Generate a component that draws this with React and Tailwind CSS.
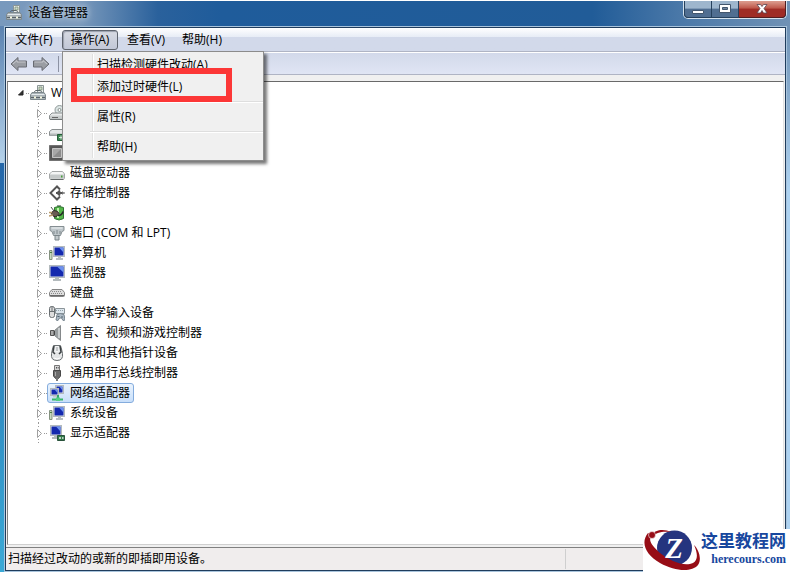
import { useState } from 'react';
import clsx from 'clsx';

const MENUS = ['文件(F)', '操作(A)', '查看(V)', '帮助(H)'];

const ACTIONS = [['扫描检测硬件改动(A)', '添加过时硬件(L)'], ['属性(R)'], ['帮助(H)']];

const DEVICES = [
  { id: 'optical', icon: OpticalIcon },
  { id: 'ide', icon: IdeIcon },
  { id: 'cpu', icon: ChipIcon },
  { id: 'disk', label: '磁盘驱动器', icon: DiskIcon },
  { id: 'storage', label: '存储控制器', icon: StorageIcon },
  { id: 'battery', label: '电池', icon: BatteryIcon },
  { id: 'port', label: '端口 (COM 和 LPT)', icon: PortIcon },
  { id: 'computer', label: '计算机', icon: ComputerIcon },
  { id: 'monitor', label: '监视器', icon: MonitorIcon },
  { id: 'keyboard', label: '键盘', icon: KeyboardIcon },
  { id: 'hid', label: '人体学输入设备', icon: HidIcon },
  { id: 'sound', label: '声音、视频和游戏控制器', icon: SpeakerIcon },
  { id: 'mouse', label: '鼠标和其他指针设备', icon: MouseIcon },
  { id: 'usb', label: '通用串行总线控制器', icon: UsbIcon },
  { id: 'network', label: '网络适配器', icon: NetworkIcon },
  { id: 'system', label: '系统设备', icon: ComputerIcon },
  { id: 'display', label: '显示适配器', icon: DisplayIcon }
];

function Icon({ children }) {
  return (
    <svg viewBox="0 0 16 16" className="size-4 shrink-0" aria-hidden="true">
      {children}
    </svg>
  );
}

function ManagerIcon() {
  return (
    <Icon>
      <path d="M7.5.5h6v8h-6z" fill="#e8ecea" stroke="#8b9695" />
      <path d="M9 2h3v3H9z" fill="#cfdccb" stroke="#71876b" strokeWidth=".7" />
      <path d="M4 7.5 5.5 5.5h5L12 7.5" fill="none" stroke="#5f686c" />
      <path d="M2 7.5h12l1.5 2.5v4.5H.5V10z" fill="#a9b2b6" stroke="#7d888d" />
      <path d="M1.5 9.5h13" stroke="#e4eaed" />
      <path d="M1 12.5h14" stroke="#596368" />
      <path d="M4 11.5h2v2H4zM10 11.5h2v2h-2z" fill="#f3f5dd" />
    </Icon>
  );
}

function OpticalIcon() {
  return (
    <Icon>
      <circle cx="10.5" cy="5" r="4.5" fill="#dce5e4" stroke="#929b9b" />
      <circle cx="10.5" cy="5" r="1.5" fill="#fff" stroke="#86918f" />
      <path d="M3 8h10.5l2 2.5V14H.5v-3.5z" fill="#e9ebeb" stroke="#8a8f90" />
      <path d="M1 10.5h14v3H1z" fill="#c9cdcd" />
      <path d="M1 14.5h14" stroke="#707576" />
      <path d="M3 12.5h6" stroke="#666" />
    </Icon>
  );
}

function IdeIcon() {
  return (
    <Icon>
      <path d="M3 4.5h10.5l2 2v4H.5v-4z" fill="#e3e6e6" stroke="#8a8f90" />
      <path d="M1 8.5h14v2H1z" fill="#b5baba" />
      <path d="M8.5 9.5h7v6h-7z" fill="#3c8652" stroke="#245c37" />
      <path d="M10 12.5h4M12 10.5v4" stroke="#d9eadb" />
    </Icon>
  );
}

function ChipIcon() {
  return (
    <Icon>
      <path d="M.5.5h15v15H.5z" fill="#5d5d5d" stroke="#393939" strokeDasharray="1 1" />
      <path d="M1.5 1.5h13v13h-13z" fill="#555" />
      <path d="M3.500 3.500h9v9h-9z" fill="#a8a8a8" stroke="#c4c4c4" />
      <path d="M4 12 12 4v8z" fill="#8d8d8d" />
    </Icon>
  );
}

function DiskIcon() {
  return (
    <Icon>
      <path d="M3 6.500h10.500l2 2.500v4q0 1-1 1h-13q-1 0-1-1V9z" fill="#f4f5f5" stroke="#a5a8a8" />
      <path d="M1 9.500h14v3.500H1z" fill="#c5c9c9" />
      <path d="M1.500 14.500h13" stroke="#666b6b" />
      <path d="M12 10.500h1.500v2H12z" fill="#48a03c" />
    </Icon>
  );
}

function StorageIcon() {
  return (
    <Icon>
      <path d="M11 4.500 8 1.500 1.500 8 8 14.500l3-3" fill="none" stroke="#555" strokeWidth="2" />
      <path d="M8 3 3 8l5 5" fill="none" stroke="#c4c4c4" />
      <path d="M7 8h8.500M11 5.500 8.500 8l2.500 2.500" fill="none" stroke="#555" strokeWidth="2" />
      <path d="M13 6.500 15 8l-2 1.500" fill="none" stroke="#999" />
    </Icon>
  );
}

function BatteryIcon() {
  return (
    <Icon>
      <path d="M8 0h4v2H8z" fill="#969b96" />
      <path d="M5.500 2.500q4.500-2 9 0v11q-4.500 3-9 0z" fill="#54b849" stroke="#327236" />
      <path d="M9 3v10" stroke="#bdf0ad" strokeWidth="2" />
      <path d="M2 8 5 5.500q4 0 5 3L7 12l-3-1z" fill="#6a5d55" stroke="#322a27" />
      <path d="M0 7.500h3M0 11l4-1" stroke="#b99b69" strokeWidth="1.5" />
      <path d="M9 10.500q4 0 5-4" fill="none" stroke="#272c28" strokeWidth="1.5" />
      <path d="m2 2 3 4" stroke="#4b514c" />
    </Icon>
  );
}

function PortIcon() {
  return (
    <Icon>
      <path d="M1 1.500h14v4l-2 1-1.500 4h-7L3 6.500l-2-1z" fill="#bfc7cb" stroke="#858e92" />
      <path d="M2.500 3h11" stroke="#f0f4f5" />
      <path d="M5 6v3M8 5v4M11 6v3" stroke="#7f888c" />
      <path d="M6 10.500h4V15H6z" fill="#c3cacd" stroke="#7b8589" />
    </Icon>
  );
}

function Screen({ x, y, w, h }) {
  return (
    <>
      <rect x={x} y={y} width={w} height={h} fill="#dfe3e5" stroke="#b3babd" />
      <rect x={x + 1} y={y + 1} width={w - 2} height={h - 2} fill="#1429ae" />
      <path d={`M${x + w / 2} ${y + 1}h${w / 2 - 1}v${h / 2}z`} fill="#6d92ed" />
    </>
  );
}

function ComputerIcon() {
  return (
    <Icon>
      <Screen x={4.5} y={1.5} w={11} h={10} />
      <path d="M9 12h3v1.500H9zM7 13h7v2H7z" fill="#b9c0c3" />
      <path d="M.5 5.500H3v9H.5z" fill="#c8dbc0" stroke="#83917e" />
      <path d="M1 7.500h2" stroke="#4d7d45" />
    </Icon>
  );
}

function MonitorIcon() {
  return (
    <Icon>
      <Screen x={0.5} y={0.5} w={15} h={12} />
      <path d="M6 13h4v1.500H6zM4 14h8v2H4z" fill="#b3babd" />
    </Icon>
  );
}

function KeyboardIcon() {
  return (
    <Icon>
      <path d="M3 4.500h10l2.500 3v3q0 1-1 1h-13q-1 0-1-1v-3z" fill="#dedede" stroke="#858585" />
      <path d="M3 6.500h10M2 8.500h12" stroke="#8a8a8a" strokeDasharray="1 1" />
      <path d="M1 10.500h14" stroke="#696969" />
    </Icon>
  );
}

function HidIcon() {
  return (
    <Icon>
      <rect x=".5" y="1.5" width="5" height="11" rx="2" fill="#ddd" stroke="#696f72" />
      <path d="M3 1v5M1 6.500h4" stroke="#696f72" />
      <path d="M6.500 3.500h9v5h-9z" fill="#dce6ed" stroke="#8b9499" />
      <path d="M7 5.500h8" stroke="#95a4ad" strokeDasharray="1 1" />
      <path d="m7 15 1-5.500q3-2 7 0l1 5.500-2 .5-1.500-2.500h-2L9 15.500z" fill="#aebbc6" stroke="#77848e" />
      <path d="M8.500 11.500h2M13 11v2" stroke="#52626d" />
    </Icon>
  );
}

function SpeakerIcon() {
  return (
    <Icon>
      <path d="M1.500 5.500H5v5H1.500z" fill="#aaa" stroke="#555" />
      <path d="M5.500 5.500 11.500.5v15l-6-5z" fill="#9a9fa1" stroke="#85898b" />
      <path d="M10 3v10" stroke="#c9cdce" strokeWidth="2" />
      <path d="M5.500 6v4" stroke="#454545" />
    </Icon>
  );
}

function MouseIcon() {
  return (
    <Icon>
      <path d="M4.500.5q-1 3-2 8-1 7 5.500 7t5.500-7q-1-5-2-8z" fill="#e4e6e7" stroke="#6b7072" />
      <path d="M5 1 4 7l2 2M11 1l1 6-2 2" fill="none" stroke="#3b4042" strokeWidth="1.5" />
      <path d="M6.500 1h3v6h-3z" fill="#f5f6f6" />
      <path d="M8 2v4" stroke="#92979a" />
      <path d="M5 13q3 2 6 0" fill="none" stroke="#fff" />
    </Icon>
  );
}

function UsbIcon() {
  return (
    <Icon>
      <path d="M5.500.5h5v5h-5z" fill="#d5d5d5" stroke="#777" />
      <path d="M7 2h.8v1.500H7zM8.800 2h.7v1.500h-.7z" fill="#333" />
      <path d="M4.500 5.500h7V11l-2 2.500h-3l-2-2.500z" fill="#6c6c6c" stroke="#494949" />
      <path d="M6.500 7v4" stroke="#aaa" />
      <path d="M8 13v3" stroke="#777" strokeWidth="2" />
    </Icon>
  );
}

function NetworkIcon() {
  return (
    <Icon>
      <Screen x={6.5} y={0.5} w={8} h={8} />
      <Screen x={1.5} y={3.5} w={8} h={7} />
      <path d="M4 11h4v1.500H4z" fill="#c3cacd" />
      <path d="M9 10v4" stroke="#35a46c" strokeWidth="2" />
      <path d="M3 14.500h11" stroke="#35b766" strokeWidth="2" />
      <path d="M7 12.500h4V16H7z" fill="#54cf82" />
    </Icon>
  );
}

function DisplayIcon() {
  return (
    <Icon>
      <Screen x={1.5} y={0.5} w={11} h={10} />
      <path d="M5 11h4v1.500H5zM3 12h5v2H3z" fill="#b3babd" />
      <path d="M8.500 10.500h7v5h-7z" fill="#317b48" stroke="#29523b" />
      <path d="M10 12h2v2h-2zM13 12h1.500v2H13z" fill="#b9cfbe" />
    </Icon>
  );
}

function TitleBar() {
  return (
    <header className="flex h-[25px] items-start justify-between pr-[3px] pl-1.5">
      <div className="flex h-6 items-center gap-1.5">
        <ManagerIcon />
        <h1 className="text-xs text-black [text-shadow:0_0_6px_#fff8,0_0_10px_#fff8]">设备管理器</h1>
      </div>
      <div className="flex h-[18px] overflow-hidden rounded-b-[5px] border border-t-0 border-[#d4e2ee] bg-[#26415d]">
        <button
          aria-label="最小化"
          className="flex w-7 items-center justify-center rounded-bl border border-t-0 border-[#26415d] bg-linear-to-b from-[#9eb6cd] from-45% to-[#506e91] to-50%"
        >
          <svg viewBox="0 0 12 12" className="size-3">
            <path d="M.5 7.500h11v3H.5z" fill="#fff" stroke="#43566d" />
          </svg>
        </button>
        <button
          aria-label="最大化"
          className="flex w-[27px] items-center justify-center border-r border-b border-[#26415d] bg-linear-to-b from-[#9eb6cd] from-45% to-[#506e91] to-50%"
        >
          <svg viewBox="0 0 12 12" className="size-3">
            <path d="M.5 1.500h11v8H.5z" fill="#fff" stroke="#43566d" />
            <path d="M3.500 4.500h5v2h-5z" fill="#70879f" stroke="#43566d" />
          </svg>
        </button>
        <button
          aria-label="关闭"
          className="flex w-[47px] items-center justify-center rounded-br border-r border-b border-[#501d20] bg-linear-to-b from-[#d99789] from-5% via-[#bd5649] via-45% to-[#9f2c25] to-50%"
        >
          <svg viewBox="0 0 12 12" className="size-3">
            <path
              d="M1 1.500h3.500L6 3.500l1.500-2H11L8 5.500l3 4.500H7.500L6 7.500 4.500 10H1l3-4.500z"
              fill="#fff"
              stroke="#5a4550"
              strokeWidth=".8"
            />
          </svg>
        </button>
      </div>
    </header>
  );
}

function ActionMenu() {
  return (
    <div className="absolute top-full left-0 z-10 mt-px w-[202px] border border-[#8c8c8c] bg-[#f0f0f0] py-0.5 shadow-[3px_3px_3px_#0008]">
      <span className="absolute inset-y-0.5 left-[29px] w-0.5 border-r border-l border-r-white border-l-[#e0e0e0]" />
      {ACTIONS.map((group, i) => (
        <div key={i} className="relative">
          {i > 0 && <hr className="my-[3px] ml-[27px] h-0.5 border-t border-b border-t-[#dedede] border-b-white" />}
          {group.map((label) => (
            <button key={label} className="block h-[22px] w-full pl-[34px] text-left hover:bg-[#dfe9f5]">
              {label}
            </button>
          ))}
        </div>
      ))}
      <span className="pointer-events-none absolute top-4 left-2 h-[34px] w-[161px] border-6 border-[#fc3737]" />
    </div>
  );
}

function MenuBar() {
  const [open, setOpen] = useState('操作(A)');
  return (
    <nav className="flex h-6 items-center border-b border-[#afb4c4] bg-linear-to-b from-white via-[#e8edf6] via-38% to-[#d2d9ea] to-40%">
      {MENUS.map((label) => (
        <div key={label} className="relative">
          <button
            onClick={() => setOpen(open === label ? null : label)}
            className={clsx(
              'block h-5 w-14 rounded-[3px] border',
              open === label
                ? 'border-[#5e646e] bg-linear-to-b from-[#d7dae2] to-[#c2c8d8] shadow-[inset_1px_1px_1px_#9a9fac]'
                : 'border-transparent'
            )}
          >
            {label}
          </button>
          {label === '操作(A)' && open === label && <ActionMenu />}
        </div>
      ))}
    </nav>
  );
}

function ToolBar() {
  return (
    <div className="flex h-[23px] items-center gap-1 border-t border-b border-t-white border-b-[#afb4c4] bg-linear-to-b from-[#d2d9ea] to-[#e0e5f4] px-1">
      {['后退', '前进'].map((label, i) => (
        <button key={label} aria-label={label}>
          <svg viewBox="0 0 18 16" className={clsx('h-4 w-[18px]', i === 1 && '-scale-x-100')}>
            <path d="M1 8 8 1.500V5h8.500v6H8v3.500z" fill="#9a9da3" stroke="#686b72" />
            <path d="M3 8 7 4.500V6h8.500" fill="none" stroke="#c5c7cc" />
          </svg>
        </button>
      ))}
      <span className="ml-1 h-4 w-px bg-[#8c92a3]" />
    </div>
  );
}

function DeviceTree() {
  const [selected, setSelected] = useState('network');
  return (
    <main className="mx-px mt-1.5 mb-0.5 grow border border-t-[#696969] border-r-[#e3e3e3] border-b-[#d0d0d0] border-l-[#808080] bg-white pt-px">
      <div className="flex h-5 items-center pl-2">
        <svg viewBox="0 0 14 10" className="h-2.5 w-3.5">
          <path d="M7 2.500V7H2.500z" fill="#333" stroke="#222" />
          <path d="M10 5.500h4" stroke="#999" strokeDasharray="1 1" />
        </svg>
        <ManagerIcon />
        <span className="ml-[5px]">W</span>
      </div>
      <ul>
        {DEVICES.map(({ id, label, icon: DeviceIcon }) => (
          <li key={id} className="flex h-5 items-center pl-7">
            <svg viewBox="0 0 11 20" className="h-5 w-[11px] shrink-0">
              <path d="M2.500 0v5M2.500 16v4" stroke="#999" strokeDasharray="1 2" />
              <path d="M1.500 6.500v8l4-4z" fill="#fff" stroke="#a0a0a0" />
              <path d="M8 10.500h3" stroke="#999" strokeDasharray="1 1" />
            </svg>
            <button
              onClick={() => setSelected(id)}
              className={clsx(
                'flex h-5 items-center gap-[5px] rounded-[3px] border pr-[3px] pl-px',
                selected === id
                  ? 'border-[#84acdd] bg-linear-to-b from-[#eaf3fd] to-[#c8dffa]'
                  : 'border-transparent'
              )}
            >
              <DeviceIcon />
              {label}
            </button>
          </li>
        ))}
      </ul>
    </main>
  );
}

function StatusBar() {
  return (
    <footer className="flex h-[23px] items-center border-t border-[#808080] bg-[#f0eded] pl-0.5">
      <p className="grow">扫描经过改动的或新的即插即用设备。</p>
      <span className="h-5 w-[220px] border-l border-[#cfcfcf]" />
    </footer>
  );
}

function SiteBadge() {
  return (
    <a href="#herecours" className="absolute right-0 bottom-0 flex h-[43px] items-start bg-white pr-1">
      <svg viewBox="0 0 58 43" className="h-[43px] w-[58px] shrink-0" aria-hidden="true">
        <circle cx="31.5" cy="19" r="17.5" fill="#25347f" />
        <path d="M5 4C-3 14 3 26 17 34C33 43 49 43 55 36C59 30 56 21 51 16C55 25 55 31 50 34C41 38 27 32 17 24C8 16 4 10 10 6z" fill="#970d16" />
        <path d="M9 6C12 0 22 0 28 3C20 2 13 3 9 8z" fill="#970d16" />
        <circle cx="9" cy="6" r="3.5" fill="#970d16" stroke="#fff" strokeWidth=".6" />
        <text
          x="31"
          y="29"
          textAnchor="middle"
          fontSize="29"
          className="fill-white font-['Liberation_Serif',serif] font-bold italic"
        >
          Z
        </text>
      </svg>
      <span className="flex flex-col items-end whitespace-nowrap text-[#17479e]">
        <span className="pt-0.5 text-[17px] leading-5 font-bold">这里教程网</span>
        <span className="font-['Liberation_Serif',serif] text-xs leading-4 font-bold">herecours.com</span>
      </span>
    </a>
  );
}

export default function App() {
  return (
    <div className="relative flex min-h-screen flex-col bg-white font-['Open_Sans','Noto_Sans_CJK_SC',sans-serif] text-xs text-black">
      <div className="flex grow flex-col border-t border-white bg-[linear-gradient(to_right,#7899bd,#7b9abc_10%,#2a619c_20%,#1f5c9b_28%,#215c98_75%,#4a78a8_86%,#7092b5)]">
        <TitleBar />
        <div className="flex grow">
          <div className="flex w-1 shrink-0 flex-col">
            <div className="h-[137px] bg-linear-to-b from-[#5b83b1] to-[#b5d2ea]" />
            <div className="grow bg-linear-to-b from-[#2567a9] to-[#3ba9d6]" />
          </div>
          <div className="flex grow flex-col border border-[#a9c4dc]">
            <div className="flex grow flex-col border border-[#1f3c5c] bg-[#f0f0f0]">
              <MenuBar />
              <ToolBar />
              <DeviceTree />
              <StatusBar />
            </div>
          </div>
          <div className="w-[3px] shrink-0 bg-linear-to-b from-[#7092b5] to-[#add2f1] to-30%" />
        </div>
      </div>
      <SiteBadge />
    </div>
  );
}
